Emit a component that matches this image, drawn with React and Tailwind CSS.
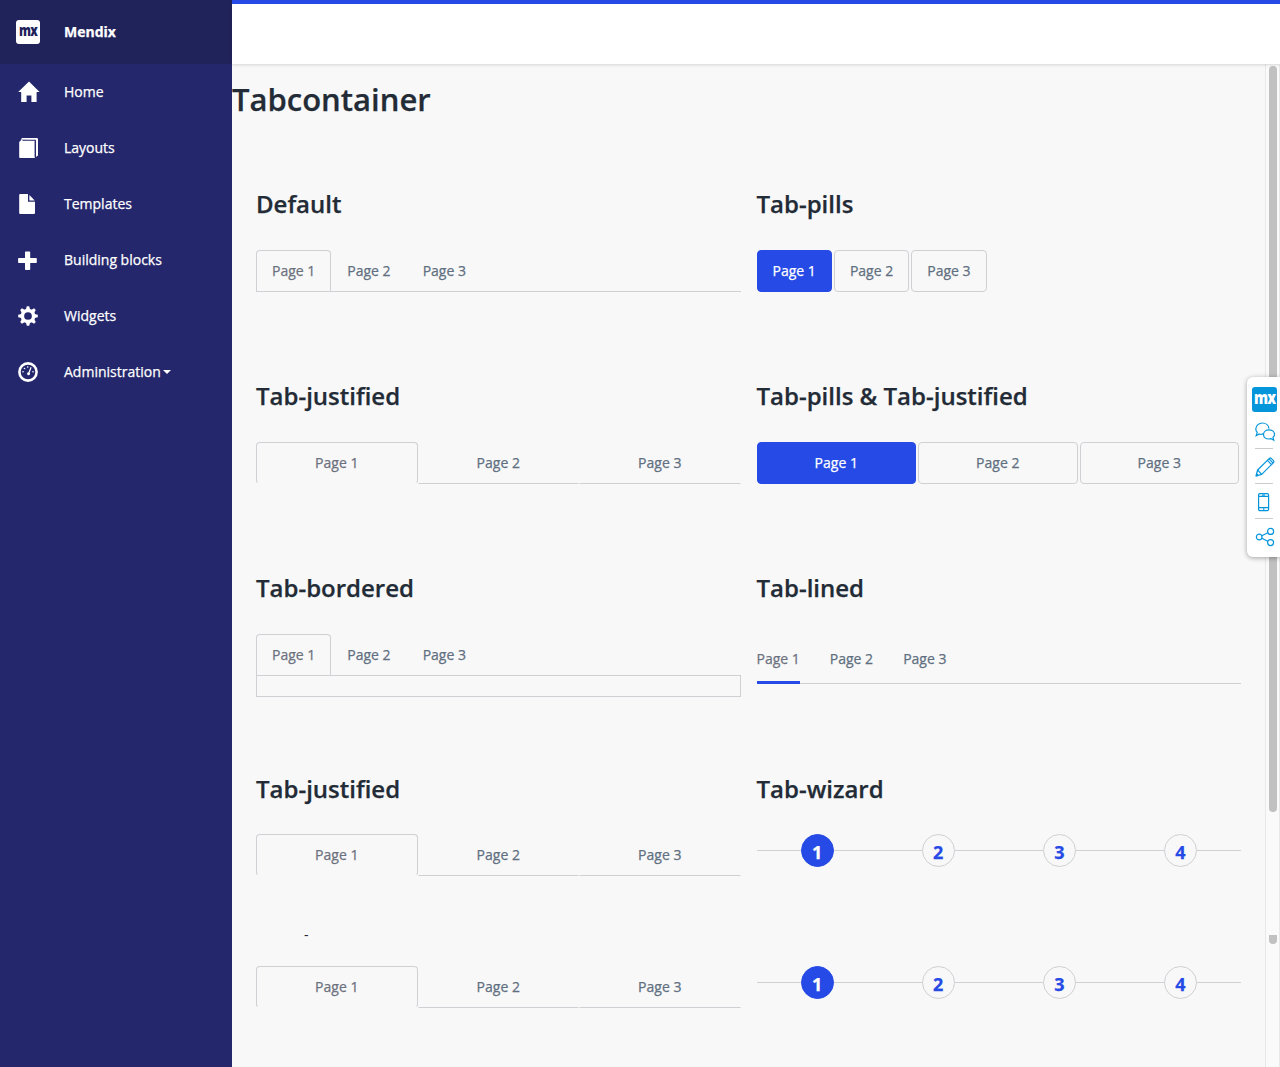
import React from 'react';

const pages = ['Page 1', 'Page 2', 'Page 3'];

function NavIcon({ name }) {
  return (
    <svg width="24" height="24" viewBox="0 0 24 24" fill="currentColor" className="shrink-0">
      {name === 'home' && <path d="M13 1.6 23.6 12H20.6V22H15.4V15.6H10.6V22H5.2V12H2.2Z" />}
      {name === 'layouts' && (
        <>
          <path d="M3.2 6 5.8 3.6H18.8V22H4.2Q3.2 22 3.2 21Z" />
          <path d="M4.6 3.4 6.2 2.1H20.8Q22 2.1 22 3.2V19.6L19.9 21V4.4Z" />
          <path d="M6.5 4.2H19.3V20.8" fill="none" stroke="#24276c" strokeWidth="1.1" />
        </>
      )}
      {name === 'templates' && (
        <>
          <path d="M4.2 2H12V9.8H19V21Q19 22 18 22H4.2Q3.2 22 3.2 21V3Q3.2 2 4.2 2Z" />
          <path d="M13.4 3 18.7 8.5H13.4Z" />
        </>
      )}
      {name === 'blocks' && <path d="M9.7 3.5h3.8q.7 0 .7.7v5.9h5.9q.7 0 .7.7v3.5q0 .7-.7.7h-5.9v6.3q0 .7-.7.7H9.7q-.7 0-.7-.7V15H2.8q-.7 0-.7-.7v-3.5q0-.7.7-.7H9V4.2q0-.7.7-.7Z" />}
      {name === 'widgets' && (
        <g transform="translate(12 12)">
          <circle r="5.6" fill="none" stroke="currentColor" strokeWidth="3.5" />
          {[0, 45, 90, 135, 180, 225, 270, 315].map((a) => (
            <path key={a} d="M-2.1-6.5-1.2-9.8H1.2L2.1-6.5Z" transform={`rotate(${a})`} />
          ))}
        </g>
      )}
      {name === 'admin' && (
        <>
          <circle cx="12" cy="12" r="8.6" fill="none" stroke="currentColor" strokeWidth="2.6" />
          <circle cx="7" cy="11.7" r=".8" />
          <circle cx="8.5" cy="8.5" r=".8" />
          <circle cx="11.7" cy="7" r=".8" />
          <circle cx="17" cy="11.7" r=".8" />
          <path d="m14.5 7 1.1.5-1.9 5.2a1.5 1.5 0 1 1-1.2-.5Z" />
        </>
      )}
    </svg>
  );
}

const nav = [
  ['home', 'Home'],
  ['layouts', 'Layouts'],
  ['templates', 'Templates'],
  ['blocks', 'Building blocks'],
  ['widgets', 'Widgets'],
  ['admin', 'Administration'],
];

function Sidebar() {
  return (
    <aside className="w-[232px] shrink-0 bg-[#24276c] text-white">
      <div className="flex h-16 items-center bg-[#20225a] pl-4">
        <div className="flex h-6 w-6 items-center justify-center rounded-[3px] bg-white">
          <span className="-mt-[4px] scale-x-[0.75] text-[16px] leading-none font-extrabold tracking-[-1px] text-[#20225a]">mx</span>
        </div>
        <span className="mb-[2px] ml-6 text-[14px] font-bold [-webkit-text-stroke:0.25px]">Mendix</span>
      </div>
      <nav>
        {nav.map(([icon, label]) => (
          <div key={icon} className="flex h-14 items-center pl-4">
            <NavIcon name={icon} />
            <span className="mb-[2px] ml-6 text-[14px] [-webkit-text-stroke:0.25px]">{label}</span>
            {icon === 'admin' && <span className="ml-[2px] border-x-4 border-t-4 border-x-transparent border-t-white" />}
          </div>
        ))}
      </nav>
    </aside>
  );
}

function Heading({ children }) {
  return <h3 className="h-[60px] pt-[2px] text-[24px] leading-none font-semibold text-[#222b36] [-webkit-text-stroke:0.25px]">{children}</h3>;
}

function Tabs({ bordered }) {
  return (
    <div>
      <div className="flex h-[42px] border-b border-[#ced0d3]">
        {pages.map((p, i) => (
          <div
            key={p}
            className={`rounded-t-[4px] border border-b-0 px-[15px] text-[14px] leading-[40px] ${i === 0 ? 'border-[#ced0d3] text-[#6c717e]' : 'border-transparent text-[#606f80]'}`}
          >
            {p}
          </div>
        ))}
      </div>
      {bordered && <div className="h-[21px] border border-t-0 border-[#ced0d3]" />}
    </div>
  );
}

function JustifiedTabs() {
  return (
    <div className="grid h-[42px] grid-cols-3">
      {pages.map((p, i) => (
        <div
          key={p}
          className={`border text-center text-[14px] leading-[40px] ${i === 0 ? 'rounded-[4px] border-[#ced0d3] border-b-[#f8f8f8] text-[#6c717e]' : 'rounded-t-[4px] border-transparent border-b-[#ced0d3] text-[#606f80]'}`}
        >
          {p}
        </div>
      ))}
    </div>
  );
}

function Pills({ justified }) {
  return (
    <div className={justified ? 'grid h-[42px] grid-cols-3' : 'flex h-[42px]'}>
      {pages.map((p, i) => (
        <div
          key={p}
          className={`mr-[2px] rounded-[4px] border px-[15px] text-center text-[14px] leading-[40px] ${justified ? '' : 'w-[75.4px]'} ${i === 0 ? 'border-[#264ae5] bg-[#264ae5] text-white' : 'border-[#ced0d3] text-[#606f80]'}`}
        >
          {p}
        </div>
      ))}
    </div>
  );
}

function LinedTabs() {
  return (
    <div className="flex h-[50px] gap-[30px] border-b border-[#ced0d3]">
      {pages.map((p, i) => (
        <div
          key={p}
          className={`h-[50px] text-[14px] leading-[50px] ${i === 0 ? 'border-b-[3px] border-[#264ae5] text-[#6c717e]' : 'text-[#606f80]'}`}
        >
          {p}
        </div>
      ))}
    </div>
  );
}

function Wizard() {
  return (
    <div className="grid h-[33px] grid-cols-4">
      {[1, 2, 3, 4].map((n) => (
        <div key={n} className="flex items-center">
          <div className="h-px flex-1 bg-[#ced0d3]" />
          <div
            className={`h-[33px] w-[33px] rounded-full border pt-px text-center text-[18px] leading-[33px] font-bold ${n === 1 ? 'border-[#264ae5] bg-[#264ae5] text-white' : 'border-[#ced0d3] text-[#264ae5]'}`}
          >
            {n}
          </div>
          <div className="h-px flex-1 bg-[#ced0d3]" />
        </div>
      ))}
    </div>
  );
}

function Row({ left, right, leftTitle, rightTitle, className = '' }) {
  return (
    <div className={`grid grid-cols-2 gap-4 [-webkit-text-stroke:0.25px] ${className}`}>
      <div>
        {leftTitle && <Heading>{leftTitle}</Heading>}
        {left}
      </div>
      <div>
        {rightTitle && <Heading>{rightTitle}</Heading>}
        {right}
      </div>
    </div>
  );
}

function Tools() {
  const icon = 'ml-2 h-5 w-5 fill-none stroke-[#0595db]';
  return (
    <div className="absolute top-[377px] right-0 h-[180px] w-[33px] rounded-l-[6px] bg-white pt-[10px] shadow-[0_1px_5px_rgba(0,0,0,0.35)]">
      <div className="ml-[5px] flex h-[25px] w-[25px] justify-center rounded-[3px] bg-[#0595db]">
        <span className="scale-x-[0.78] text-[18px] leading-[21px] font-extrabold tracking-[-1px] text-white">mx</span>
      </div>
      <svg viewBox="0 0 20 20" className={`${icon} mt-[10px]`} strokeWidth="1.2">
        <path d="M8.2 11.9Q6.2 12.6 4.2 12L1.2 13.7 2.2 10.4Q.7 8.8.8 6.8C1 3.5 4 1 7.3 1S13.6 3.2 14 6.6" />
        <path d="M14 7.8c-3.2 0-5.5 2-5.5 4.6s2.3 4.6 5.5 4.6q1 0 2-.4l2.8 1.7-.8-3q1.5-1.3 1.5-2.9c0-2.6-2.3-4.6-5.5-4.6Z" />
      </svg>
      <div className="mt-[6px] ml-2 h-px w-[18px] bg-[#cccccc]" />
      <svg viewBox="0 0 20 20" className={`${icon} mt-[8px]`} strokeWidth="1.2" strokeLinejoin="round">
        <path d="m1 19 1.6-6L14.4 1.4q.9-.8 1.8 0l2.3 2.3q.8.9 0 1.8L6.7 17.4Z" />
        <path d="m2.6 13 4.1 4.4M12.4 3.4l4.1 4.2M14 1.9l4.1 4.2M1 19l2.2-.6-1.6-1.7" />
      </svg>
      <div className="mt-[6px] ml-2 h-px w-[18px] bg-[#cccccc]" />
      <svg viewBox="0 0 20 20" className={`${icon} mt-[8px]`} strokeWidth="1.2">
        <rect x="3.6" y="1.6" width="10" height="17" rx="1.3" />
        <path d="M3.6 4.4h10M3.6 15.7h10M7 3h3M8 17.2h1.4" />
      </svg>
      <div className="mt-[6px] ml-2 h-px w-[18px] bg-[#cccccc]" />
      <svg viewBox="0 0 20 20" className={`${icon} mt-[8px]`} strokeWidth="1.2">
        <circle cx="4.2" cy="10" r="2.8" />
        <circle cx="15.6" cy="4.4" r="3" />
        <circle cx="15.6" cy="15.6" r="3" />
        <path d="m6.8 8.8 6-3M6.8 11.2l6 3" />
      </svg>
    </div>
  );
}

export default function App() {
  return (
    <div className="relative flex h-[1067px] w-[1280px] overflow-hidden bg-[#f8f8f8] font-['Open_Sans',sans-serif]">
      <Sidebar />
      <div className="flex min-w-0 flex-1 flex-col">
        <header className="z-10 h-16 shrink-0 border-t-4 border-[#264ae5] bg-white shadow-[0_1px_3px_rgba(0,0,0,0.15)]" />
        <div className="flex min-h-0 flex-1">
          <main className="min-w-0 flex-1">
            <h1 className="h-[126px] pt-[15px] text-[31px] leading-[40px] font-semibold text-[#222b36] [-webkit-text-stroke:0.25px]">Tabcontainer</h1>
            <div className="px-6">
              <Row className="h-[192px]" leftTitle="Default" left={<Tabs />} rightTitle="Tab-pills" right={<Pills />} />
              <Row className="h-[192px]" leftTitle="Tab-justified" left={<JustifiedTabs />} rightTitle="Tab-pills & Tab-justified" right={<Pills justified />} />
              <Row className="h-[200px]" leftTitle="Tab-bordered" left={<Tabs bordered />} rightTitle="Tab-lined" right={<LinedTabs />} />
              <Row className="h-[145px] [&_h3]:pt-[3px]" leftTitle="Tab-justified" left={<JustifiedTabs />} rightTitle="Tab-wizard" right={<Wizard />} />
              <div className="h-[47px] pt-[6px] pl-12 text-[14px] leading-[20px] text-[#222b36]">-</div>
              <Row left={<JustifiedTabs />} right={<Wizard />} />
            </div>
          </main>
          <div className="w-[15px] border-x border-[#e8e8e8] bg-[#fafafa] pl-[3px]">
            <div className="mt-[2px] h-[746px] w-2 rounded-full bg-[#c1c1c1]" />
            <div className="mt-[123px] h-[9px] w-2 rounded-b-full bg-[#c1c1c1]" />
          </div>
        </div>
      </div>
      <Tools />
    </div>
  );
}
